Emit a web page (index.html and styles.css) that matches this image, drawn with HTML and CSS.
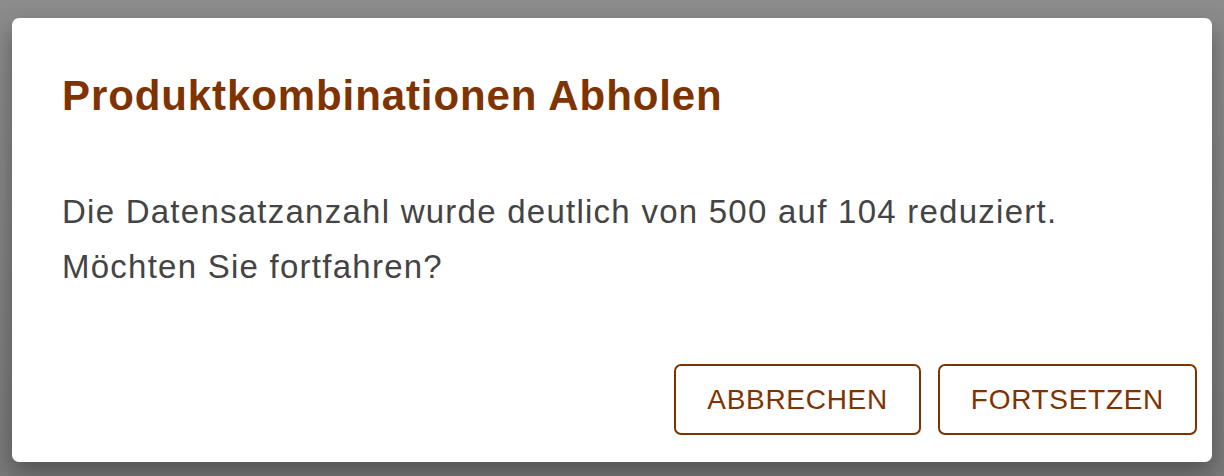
FILE: index.html
```html
<!DOCTYPE html>
<html lang="de">
<head>
    <meta charset="UTF-8">
    <meta name="viewport" content="width=device-width, initial-scale=1.0">
    <title>Produktkombinationen Abholen</title>
    <link rel="stylesheet" href="styles.css">
</head>
<body>
    <div class="dialog">
        <h2 class="dialog-title">Produktkombinationen Abholen</h2>
        <p class="dialog-text">Die Datensatzanzahl wurde deutlich von 500 auf 104 reduziert.<br>Möchten Sie fortfahren?</p>
        <!-- Actions -->
        <div class="dialog-actions">
            <button type="button" class="btn">ABBRECHEN</button>
            <button type="button" class="btn">FORTSETZEN</button>
        </div>
    </div>
</body>
</html>
```

FILE: styles.css
```css
/* General Styling */
body {
    font-family: 'Liberation Sans', Arial, sans-serif;
    background: linear-gradient(to bottom, #8c8c8c, #7a7a7a);
    margin: 0;
    padding: 18px 12px 14px;
    height: 476px;
    box-sizing: border-box;
    overflow: hidden;
}
.dialog {
    height: 444px;
    box-sizing: border-box;
    background: #fff;
    border-radius: 7px;
    padding: 54px 15px 27px 50px;
    display: flex;
    flex-direction: column;
    box-shadow: 0 10px 24px rgba(0, 0, 0, 0.35);
}
.dialog-title {
    margin: 0;
    font-size: 42px;
    line-height: 48px;
    font-weight: bold;
    letter-spacing: 0.9px;
    color: #7f3300;
}
.dialog-text {
    margin: 64px 0 0;
    font-size: 33px;
    line-height: 55px;
    letter-spacing: 1.25px;
    color: #444;
}
.dialog-actions {
    margin-top: auto;
    display: flex;
    justify-content: flex-end;
    gap: 17px;
}
.btn {
    height: 71px;
    padding: 0 31px;
    background: #fff;
    border: 2px solid #7f3300;
    border-radius: 7px;
    color: #7f3300;
    font-family: inherit;
    font-size: 28px;
    letter-spacing: 0.7px;
    cursor: pointer;
}
```
